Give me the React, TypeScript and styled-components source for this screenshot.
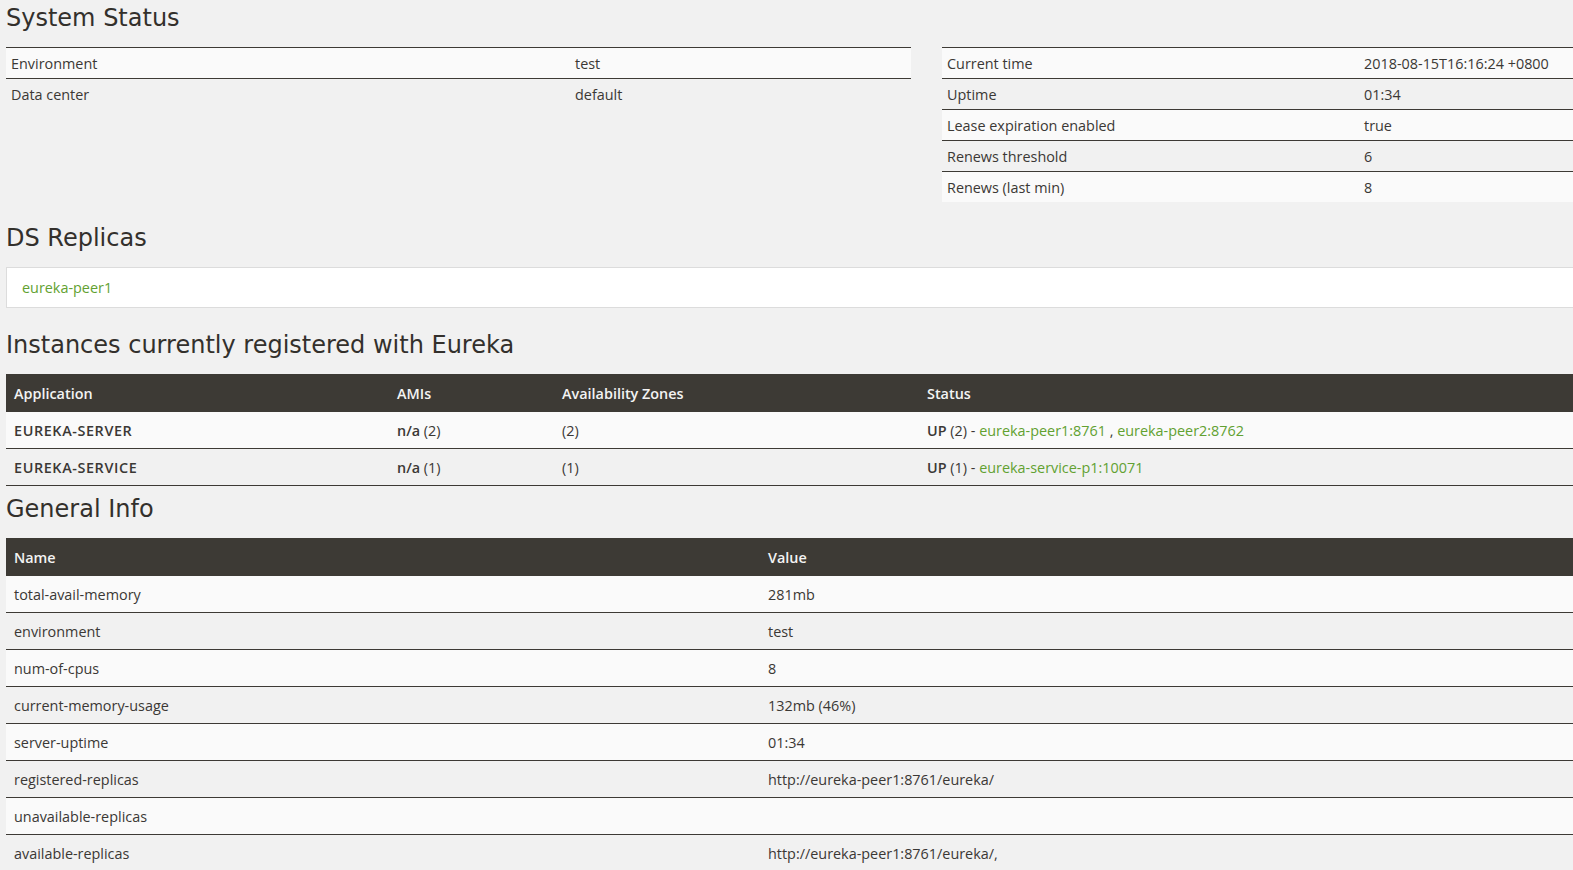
import styled, { createGlobalStyle } from 'styled-components';

const PAGE_BG = '#f1f1f1';
const ROW_LIGHT = '#fafafa';
const HEAD_BG = '#3d3a35';
const TEXT = '#3b3835';
const LINK = '#62a131';
const LINE = '#3d3a35';

const GlobalStyle = createGlobalStyle`
  html, body {
    margin: 0;
    padding: 0;
    background: ${PAGE_BG};
    overflow: hidden;
  }
  body {
    font-family: 'Open Sans', 'Liberation Sans', sans-serif;
    font-size: 14.4px;
    color: ${TEXT};
  }
`;

const Page = styled.div`
  width: 1847px;
  padding-left: 6px;
`;

const Heading = styled.h2<{ $top: number }>`
  margin: ${(p) => p.$top}px 0 16px;
  font-family: 'DejaVu Sans', 'Open Sans', sans-serif;
  font-weight: 400;
  font-size: 24px;
  line-height: 26px;
  color: #33302c;
`;

const StatusGrid = styled.div`
  display: grid;
  grid-template-columns: 905px 905px;
  column-gap: 31px;
  align-items: start;
`;

const StatusTable = styled.table`
  width: 100%;
  border-collapse: collapse;
  border-top: 1px solid ${LINE};

  td {
    height: 30px;
    padding: 0 5px;
    vertical-align: middle;
  }
  tr + tr td {
    border-top: 1px solid ${LINE};
  }
  tr:nth-child(odd) {
    background: ${ROW_LIGHT};
  }
`;

const ReplicaBox = styled.div`
  height: 39px;
  display: flex;
  align-items: center;
  padding-left: 15px;
  background: #fff;
  border: 1px solid #dcdcdc;
`;

const Link = styled.a`
  color: ${LINK};
  text-decoration: none;
`;

const DataTable = styled.table`
  width: 100%;
  border-collapse: collapse;

  th {
    height: 38px;
    padding: 0 8px;
    background: ${HEAD_BG};
    color: #f3f3f3;
    font-weight: 600;
    text-align: left;
    vertical-align: middle;
  }
  td {
    height: 36px;
    padding: 0 8px;
    border-bottom: 1px solid ${LINE};
    vertical-align: middle;
  }
  tbody tr:nth-child(odd) {
    background: ${ROW_LIGHT};
  }
`;

const Strong = styled.b<{ $wide?: boolean }>`
  font-weight: 600;
  letter-spacing: ${(p) => (p.$wide ? '0.6px' : '0')};
`;

const leftStatus: [string, string][] = [
  ['Environment', 'test'],
  ['Data center', 'default'],
];

const rightStatus: [string, string][] = [
  ['Current time', '2018-08-15T16:16:24 +0800'],
  ['Uptime', '01:34'],
  ['Lease expiration enabled', 'true'],
  ['Renews threshold', '6'],
  ['Renews (last min)', '8'],
];

const instances = [
  { app: 'EUREKA-SERVER', count: 2, links: ['eureka-peer1:8761', 'eureka-peer2:8762'] },
  { app: 'EUREKA-SERVICE', count: 1, links: ['eureka-service-p1:10071'] },
];

const generalInfo: [string, string][] = [
  ['total-avail-memory', '281mb'],
  ['environment', 'test'],
  ['num-of-cpus', '8'],
  ['current-memory-usage', '132mb (46%)'],
  ['server-uptime', '01:34'],
  ['registered-replicas', 'http://eureka-peer1:8761/eureka/'],
  ['unavailable-replicas', ''],
  ['available-replicas', 'http://eureka-peer1:8761/eureka/,'],
];

export default function App() {
  return (
    <>
      <GlobalStyle />
      <Page>
        <Heading $top={5}>System Status</Heading>
        <StatusGrid>
          <StatusTable>
            <colgroup>
              <col style={{ width: 564 }} />
              <col />
            </colgroup>
            <tbody>
              {leftStatus.map(([k, v]) => (
                <tr key={k}>
                  <td>{k}</td>
                  <td>{v}</td>
                </tr>
              ))}
            </tbody>
          </StatusTable>
          <StatusTable>
            <colgroup>
              <col style={{ width: 417 }} />
              <col />
            </colgroup>
            <tbody>
              {rightStatus.map(([k, v]) => (
                <tr key={k}>
                  <td>{k}</td>
                  <td>{v}</td>
                </tr>
              ))}
            </tbody>
          </StatusTable>
        </StatusGrid>

        <Heading $top={23}>DS Replicas</Heading>
        <ReplicaBox>
          <Link href="#">eureka-peer1</Link>
        </ReplicaBox>

        <Heading $top={24}>Instances currently registered with Eureka</Heading>
        <DataTable>
          <colgroup>
            <col style={{ width: 383 }} />
            <col style={{ width: 165 }} />
            <col style={{ width: 365 }} />
            <col />
          </colgroup>
          <thead>
            <tr>
              <th>Application</th>
              <th>AMIs</th>
              <th>Availability Zones</th>
              <th>Status</th>
            </tr>
          </thead>
          <tbody>
            {instances.map((row) => (
              <tr key={row.app}>
                <td>
                  <Strong $wide>{row.app}</Strong>
                </td>
                <td>
                  <Strong>n/a</Strong> ({row.count})
                </td>
                <td>({row.count})</td>
                <td>
                  <Strong>UP</Strong> ({row.count}) -{' '}
                  {row.links.map((l, i) => (
                    <span key={l}>
                      {i > 0 && ' , '}
                      <Link href="#">{l}</Link>
                    </span>
                  ))}
                </td>
              </tr>
            ))}
          </tbody>
        </DataTable>

        <Heading $top={10}>General Info</Heading>
        <DataTable>
          <colgroup>
            <col style={{ width: 754 }} />
            <col />
          </colgroup>
          <thead>
            <tr>
              <th>Name</th>
              <th>Value</th>
            </tr>
          </thead>
          <tbody>
            {generalInfo.map(([k, v]) => (
              <tr key={k}>
                <td>{k}</td>
                <td>{v}</td>
              </tr>
            ))}
          </tbody>
        </DataTable>
      </Page>
    </>
  );
}
